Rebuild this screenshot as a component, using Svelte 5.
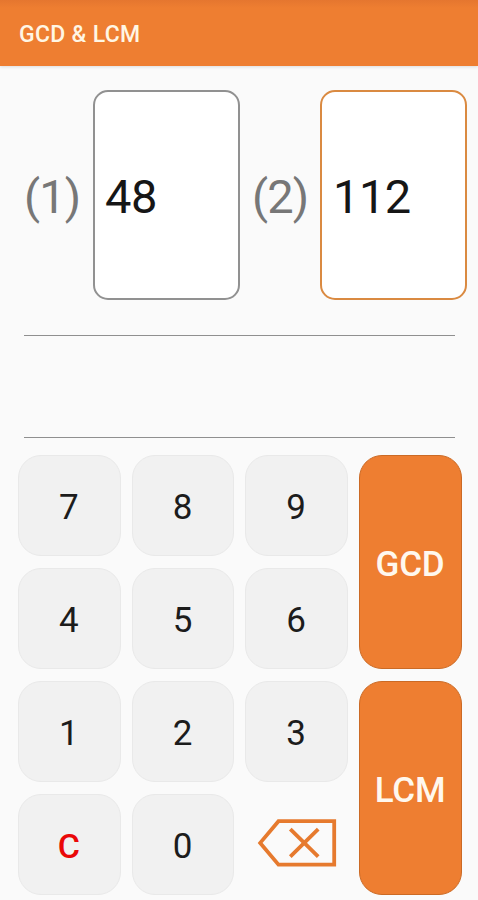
<script lang="ts">
	let first = '48';
	let second = '112';
	let active = 2;
	let result = '';

	const keys = ['7', '8', '9', '4', '5', '6', '1', '2', '3', 'C', '0'];

	function press(key: string) {
		if (key === 'C') {
			first = '';
			second = '';
			result = '';
			active = 1;
		} else if (active === 1) {
			first += key;
		} else {
			second += key;
		}
	}

	function erase() {
		if (active === 1) {
			first = first.slice(0, -1);
		} else {
			second = second.slice(0, -1);
		}
	}

	function gcd(a: number, b: number): number {
		return b === 0 ? a : gcd(b, a % b);
	}

	function showGcd() {
		result = String(gcd(Number(first), Number(second)));
	}

	function showLcm() {
		const a = Number(first);
		const b = Number(second);
		result = a && b ? String((a * b) / gcd(a, b)) : '0';
	}
</script>

<div class="app">
	<header>GCD &amp; LCM</header>

	<div class="numbers">
		<span class="label">(1)</span>
		<button class="field" class:active={active === 1} on:click={() => (active = 1)}>{first}</button>
		<span class="label">(2)</span>
		<button class="field" class:active={active === 2} on:click={() => (active = 2)}>{second}</button>
	</div>

	<div class="result">{result}</div>

	<div class="keypad">
		<div class="digits">
			{#each keys as key}
				<button class="key" class:clear={key === 'C'} on:click={() => press(key)}>{key}</button>
			{/each}
			<button class="erase" aria-label="Backspace" on:click={erase}>
				<svg width="80" height="50" viewBox="0 0 80 50" fill="none" stroke="#e67a2e">
					<path d="M21.5 3.2H77.2V46.6H21.5L3.2 24.9Z" stroke-width="3.8" />
					<path d="M33.3 11.2L61.2 38.6M61.2 11.2L33.3 38.6" stroke-width="3.8" />
				</svg>
			</button>
		</div>
		<div class="actions">
			<button class="action" on:click={showGcd}>GCD</button>
			<button class="action" on:click={showLcm}>LCM</button>
		</div>
	</div>
</div>

<style>
	:global(body) {
		margin: 0;
		background: #fafafa;
	}

	.app {
		width: 478px;
		height: 900px;
		overflow: hidden;
		display: flex;
		flex-direction: column;
		box-sizing: border-box;
		background: #fafafa;
		font-family: Roboto, 'Liberation Sans', sans-serif;
	}

	button {
		padding: 0;
		font-family: inherit;
		box-sizing: border-box;
		cursor: pointer;
	}

	header {
		height: 66px;
		flex-shrink: 0;
		box-sizing: border-box;
		padding: 2px 0 0 19px;
		display: flex;
		align-items: center;
		background: linear-gradient(#e5762f, #ee7e31 8px);
		box-shadow: 0 1px 3px rgba(0, 0, 0, 0.12);
		color: #fff6e4;
		font-size: 23px;
		font-weight: 500;
		letter-spacing: 0.3px;
	}

	.numbers {
		display: grid;
		grid-template-columns: 69px 147px 80px 147px;
		height: 210px;
		margin: 24px 0 0 24px;
		align-items: center;
	}

	.label {
		padding-top: 3px;
		color: #777;
		font-size: 47px;
		letter-spacing: -0.9px;
	}

	.label:nth-of-type(2) {
		padding-left: 12px;
	}

	.field {
		height: 210px;
		padding: 2px 0 0 10px;
		border: 2px solid #919191;
		border-radius: 15px;
		background: #fff;
		color: #161616;
		font-size: 47px;
		letter-spacing: -0.5px;
		text-align: left;
	}

	.field.active {
		padding-left: 11px;
		border-color: #da8a41;
	}

	.result {
		height: 103px;
		margin: 35px 23px 0 24px;
		box-sizing: border-box;
		border-top: 1px solid #8f8f8f;
		border-bottom: 1px solid #8f8f8f;
		display: flex;
		align-items: center;
		justify-content: flex-end;
		font-size: 47px;
		color: #161616;
	}

	.keypad {
		display: flex;
		gap: 11px;
		height: 440px;
		margin: 17px 16px 0 18px;
	}

	.digits {
		width: 330px;
		display: grid;
		grid-template-columns: repeat(3, 1fr);
		grid-template-rows: repeat(4, 1fr);
		gap: 12px 11px;
	}

	.key {
		border: 1px solid #e9e9e9;
		border-radius: 23px;
		background: #f1f1f1;
		color: #1c1c1c;
		font-size: 35px;
		padding: 3px 1px 0 0;
	}

	.key.clear {
		color: #ea0808;
		font-weight: 500;
		font-size: 34px;
	}

	.erase {
		display: flex;
		align-items: center;
		justify-content: center;
		padding-bottom: 3px;
		border: none;
		background: none;
	}

	.actions {
		flex: 1;
		display: grid;
		grid-template-rows: 1fr 1fr;
		gap: 12px;
	}

	.action {
		border: 1px solid #cb6a25;
		border-radius: 23px;
		background: #ee7e31;
		color: #fff8ee;
		font-size: 35px;
		font-weight: 500;
		letter-spacing: -0.2px;
		padding: 4px 1px 0 0;
	}
</style>
